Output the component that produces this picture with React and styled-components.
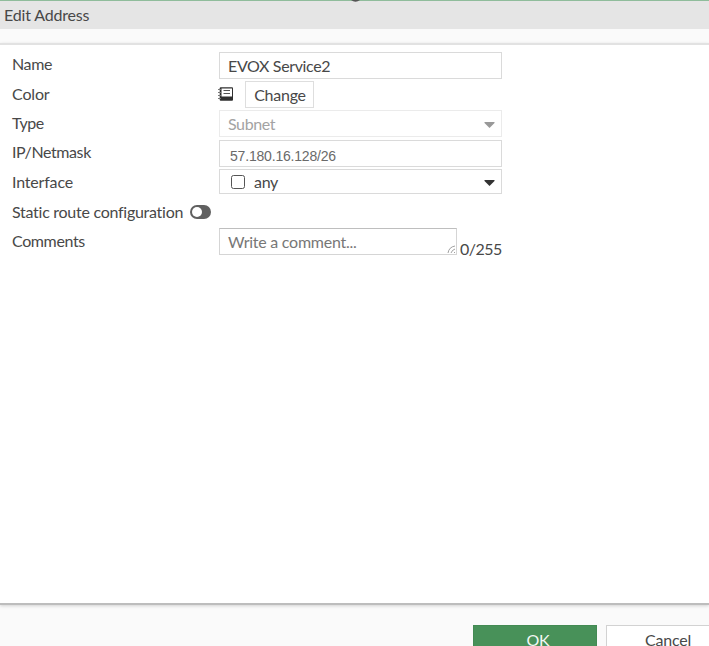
import React from "react";
import styled, { createGlobalStyle } from "styled-components";

const GlobalStyle = createGlobalStyle`
  * {
    box-sizing: border-box;
  }

  body {
    margin: 0;
    overflow: hidden;
    background: #fafafa;
    color: #484848;
    font-family: Lato, sans-serif;
    font-size: 16px;
    line-height: 20px;
  }
`;

const Page = styled.div`
  display: flex;
  flex-direction: column;
  height: 646px;
  overflow: hidden;
`;

const TopBar = styled.div`
  flex: none;
  height: 1px;
  background: #8fbc9b;
`;

const Descender = styled.svg`
  position: absolute;
  top: 0;
  left: 350px;
`;

const Header = styled.header`
  flex: none;
  height: 28px;
  padding: 4px 4px 0;
  background: #e5e5e5;
`;

const Panel = styled.main`
  flex: none;
  height: 562px;
  margin-top: 14px;
  padding: 7px 12px 0;
  background: #fff;
  border-top: 2px solid #e2e2e2;
  border-bottom: 2px solid #bdbdbd;
  box-shadow: 0 1px 3px rgba(0, 0, 0, 0.16);
`;

const Row = styled.div`
  display: flex;
  align-items: flex-start;
  height: ${(props) => props.$height || 29}px;
`;

const Label = styled.div`
  display: flex;
  align-items: center;
  gap: 7px;
  width: 207px;
  padding-top: ${(props) => props.$top || 3}px;
  white-space: nowrap;
`;

const Text = styled.span`
  display: inline-block;
  white-space: nowrap;
  letter-spacing: ${(props) => props.$spacing || 0}px;
`;

const Field = styled.div`
  display: flex;
  align-items: center;
  width: 283px;
  height: ${(props) => props.$height || 27}px;
  padding: 1px 6px 0 8px;
  background: #fff;
  border: 1px solid ${(props) => (props.$disabled ? "#ebebeb" : "#dadada")};
  color: ${(props) => (props.$disabled ? "#a3a3a3" : "#484848")};
`;

const Address = styled(Text)`
  margin: 4px 0 0 2px;
  color: #6a6a6a;
  font-family: "Liberation Sans", Arial, sans-serif;
  font-size: 14px;
`;

const Caret = styled.svg`
  margin: 2px 0 0 auto;
`;

const ColorIcon = styled.svg`
  margin: 5px 11px 0 -1px;
`;

const ChangeButton = styled.button`
  width: 69px;
  height: 27px;
  padding: 1px 0 0 1px;
  background: #fff;
  border: 1px solid #dedede;
  color: #484848;
  font: inherit;
`;

const Checkbox = styled.span`
  width: 14px;
  height: 14px;
  margin: -1px 9px 0 3px;
  border: 1.5px solid #555;
  border-radius: 2.5px;
`;

const Toggle = styled.span`
  display: flex;
  width: 21px;
  height: 14px;
  padding: 2px;
  background: #606060;
  border-radius: 7px;

  &::before {
    content: "";
    width: 10px;
    height: 10px;
    background: #fff;
    border-radius: 50%;
  }
`;

const Comment = styled.div`
  display: flex;
  justify-content: space-between;
  width: 238px;
  height: 27px;
  padding: 3px 0 0 8px;
  border: 1px solid #d5d5d5;
  border-top-color: #bebebe;
  color: #777;
`;

const Grip = styled.svg`
  align-self: flex-end;
`;

const Counter = styled.span`
  margin: 11px 0 0 3px;
  letter-spacing: -0.5px;
`;

const Footer = styled.footer`
  display: flex;
  gap: 9px;
  padding: 20px 0 0 473px;
`;

const FooterButton = styled.button`
  flex: none;
  width: 124px;
  height: 30px;
  padding: 0 0 0 ${(props) => (props.$primary ? 6 : 0)}px;
  background: ${(props) => (props.$primary ? "#489159" : "#fff")};
  border: 1px solid ${(props) => (props.$primary ? "#438a53" : "#d2d2d2")};
  color: ${(props) => (props.$primary ? "#f3f8f4" : "#484848")};
  font: inherit;
  letter-spacing: -0.2px;
`;

const DownArrow = ({ color }) => (
  <Caret width="11" height="6" viewBox="0 0 11 6">
    <path d="M.5 0h10v1L5.500 6l-5-5z" fill={color} />
  </Caret>
);

const App = () => {
  return (
    <>
      <GlobalStyle />
      <Page>
        <TopBar />
        <Descender width="11" height="3" viewBox="0 0 11 3">
          <path d="M1 0h9Q5.500 3.500 1 0z" fill="#555" />
        </Descender>
        <Header>
          <Text $spacing={-0.17}>Edit Address</Text>
        </Header>
        <Panel>
          <Row>
            <Label $top={2}>
              <Text $spacing={-0.4}>Name</Text>
            </Label>
            <Field>
              <Text $spacing={-0.35}>EVOX Service2</Text>
            </Field>
          </Row>
          <Row>
            <Label>
              <Text $spacing={-0.15}>Color</Text>
            </Label>
            <ColorIcon width="16" height="16" viewBox="0 0 16 16">
              <rect x="1.700" y="1.200" width="13.300" height="13.600" rx="1" fill="#303030" />
              <path d="M3.500 2.500h10.500v8H3.500z" fill="#fff" />
              <path d="M5.500 4.500h6.500M5.500 7.500h6.500" stroke="#555" />
              <path d="M0 3.500h3M0 6.500h3M0 9.500h3M0 12.500h3" stroke="#777" />
            </ColorIcon>
            <ChangeButton>
              <Text $spacing={-0.25}>Change</Text>
            </ChangeButton>
          </Row>
          <Row $height={30}>
            <Label>
              <Text $spacing={-0.5}>Type</Text>
            </Label>
            <Field $disabled>
              <Text $spacing={-0.4}>Subnet</Text>
              <DownArrow color="#999" />
            </Field>
          </Row>
          <Row>
            <Label $top={2}>
              <Text $spacing={-0.4}>IP/Netmask</Text>
            </Label>
            <Field>
              <Address $spacing={-0.19}>57.180.16.128/26</Address>
            </Field>
          </Row>
          <Row $height={30}>
            <Label>
              <Text $spacing={-0.18}>Interface</Text>
            </Label>
            <Field $height={25}>
              <Checkbox />
              <Text $spacing={-0.3}>any</Text>
              <DownArrow color="#333" />
            </Field>
          </Row>
          <Row>
            <Label>
              <Text $spacing={-0.27}>Static route configuration</Text>
              <Toggle />
            </Label>
          </Row>
          <Row>
            <Label>
              <Text $spacing={-0.38}>Comments</Text>
            </Label>
            <Comment>
              <Text $spacing={-0.25}>Write a comment...</Text>
              <Grip width="9" height="9" viewBox="0 0 9 9">
                <path d="M1 8Q2 2 8 1M4 8Q5 5 8 4M7 8l1-1" fill="none" stroke="#888" strokeWidth=".8" />
              </Grip>
            </Comment>
            <Counter>0/255</Counter>
          </Row>
        </Panel>
        <Footer>
          <FooterButton $primary>OK</FooterButton>
          <FooterButton>Cancel</FooterButton>
        </Footer>
      </Page>
    </>
  );
};

export default App;
